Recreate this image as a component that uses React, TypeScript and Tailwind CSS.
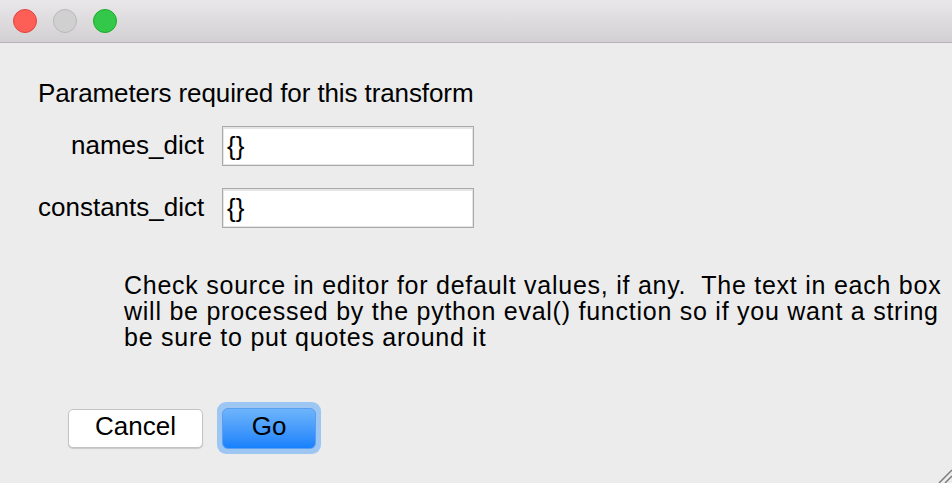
import React from "react";

function Field({ label }: { label: string }) {
  return (
    <div className="flex items-center h-[39px]">
      <div className="w-[184px] text-right pr-[18px] whitespace-nowrap">{label}</div>
      <div className="w-[252px] h-[40px] border border-[#a9a9a9] bg-white flex items-center">
        <div className="w-full h-full border-t-2 border-l border-[#e6e6e6] border-r border-b px-[3px] flex items-center text-[26px]">
          {"{}"}
        </div>
      </div>
    </div>
  );
}

export default function App() {
  return (
    <div
      className="w-[952px] h-[483px] bg-[#ececec] flex flex-col overflow-hidden relative text-black"
      style={{ fontFamily: "'Liberation Sans', Arial, sans-serif" }}
    >
      {/* title bar */}
      <div className="h-[43px] shrink-0 bg-gradient-to-b from-[#e9e7e9] to-[#d2d0d2] border-b border-[#b5b3b5] flex items-center gap-[16px] pl-[13px]">
        <span className="w-[24px] h-[24px] rounded-full bg-[#fd5f57] border border-[#e0443e]" />
        <span className="w-[24px] h-[24px] rounded-full bg-[#d0d0d0] border border-[#b9b9b9]" />
        <span className="w-[24px] h-[24px] rounded-full bg-[#34c84a] border border-[#1aab29]" />
      </div>

      <div className="flex flex-col pl-[38px] pt-[34px] text-[26px]">
        <div className="leading-[32px] -tracking-[0.1px]">Parameters required for this transform</div>
        <div className="flex flex-col gap-[23px] mt-[17px]">
          <Field label="names_dict" />
          <Field label="constants_dict" />
        </div>
        <div className="ml-[86px] mt-[45px] text-[25px] leading-[26px] tracking-[0.75px] whitespace-nowrap">
          Check source in editor for default values, if any.&nbsp; The text in each box
          <br />
          will be processed by the python eval() function so if you want a string
          <br />
          be sure to put quotes around it
        </div>
        <div className="flex items-center gap-[14px] mt-[52px] ml-[30px]">
          <button className="w-[135px] h-[39px] rounded-[5px] bg-white border border-[#c3c3c3] shadow-[0_1px_1px_rgba(0,0,0,0.15)] text-[26px] leading-none pb-[5px]">
            Cancel
          </button>
          <div className="p-[5px] rounded-[9px] bg-[#9dc6f3]">
            <button className="w-[94px] h-[41px] rounded-[6px] bg-gradient-to-b from-[#6db4fb] to-[#1681fb] border border-[#5a9ef0] text-[26px] leading-none pb-[5px]">
              Go
            </button>
          </div>
        </div>
      </div>

      {/* resize grip */}
      <svg className="absolute right-0 bottom-0" width="20" height="20" viewBox="0 0 20 20">
        <line x1="20" y1="7" x2="7" y2="20" stroke="#7a7a7a" strokeWidth="1.5" />
        <line x1="20" y1="13" x2="13" y2="20" stroke="#7a7a7a" strokeWidth="1.5" />
      </svg>
    </div>
  );
}
